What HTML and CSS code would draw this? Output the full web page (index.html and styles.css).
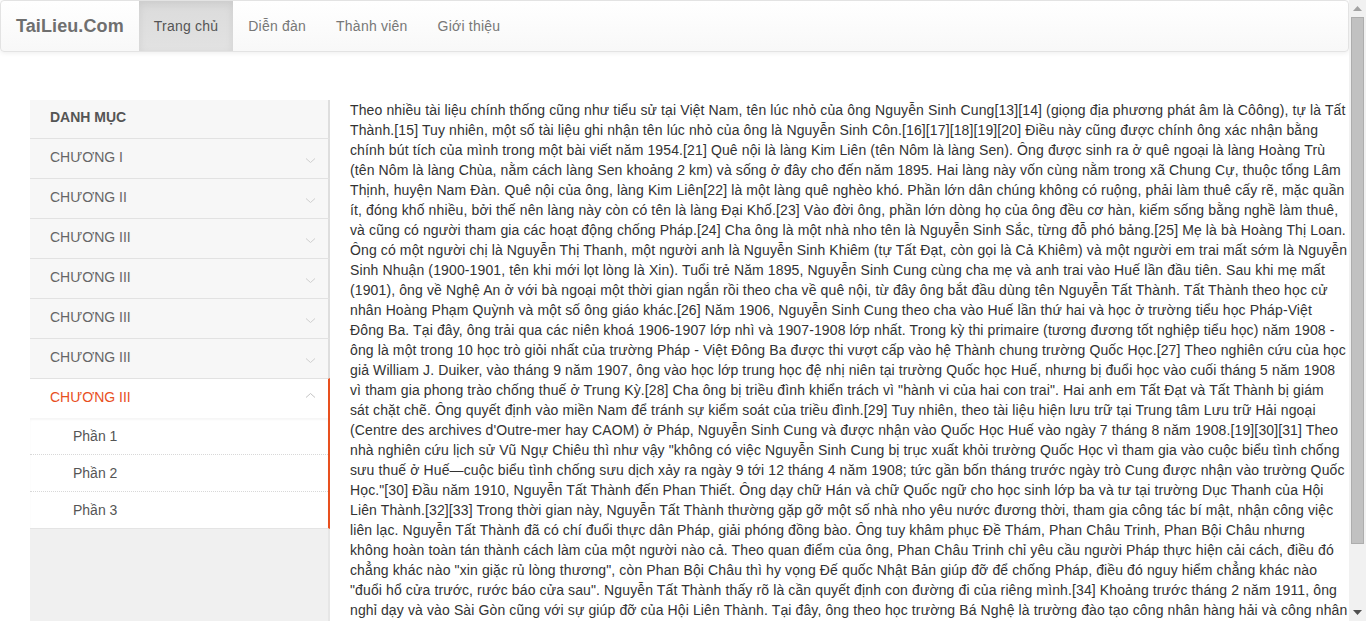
FILE: index.html
```html
<!DOCTYPE html>
<html lang="vi">
<head>
<meta charset="utf-8">
<title>TaiLieu.Com</title>
<link rel="stylesheet" href="styles.css">
</head>
<body>
<div class="page">
  <nav class="navbar">
    <a class="brand" href="#">TaiLieu.Com</a>
    <ul class="nav">
      <li class="active"><a href="#">Trang chủ</a></li>
      <li><a href="#">Diễn đàn</a></li>
      <li><a href="#">Thành viên</a></li>
      <li><a href="#">Giới thiệu</a></li>
    </ul>
  </nav>
  <div class="main-row">
    <aside class="sidebar">
      <div class="side-head">DANH MỤC</div>
      <ul class="menu">
        <li class="menu-item"><span>CHƯƠNG I</span><svg class="chev" width="11" height="12" viewBox="0 0 11 12"><polyline points="1,4.5 5.5,8.5 10,4.5" fill="none" stroke="#cfcfcf" stroke-width="1"/></svg></li>
        <li class="menu-item"><span>CHƯƠNG II</span><svg class="chev" width="11" height="12" viewBox="0 0 11 12"><polyline points="1,4.5 5.5,8.5 10,4.5" fill="none" stroke="#cfcfcf" stroke-width="1"/></svg></li>
        <li class="menu-item"><span>CHƯƠNG III</span><svg class="chev" width="11" height="12" viewBox="0 0 11 12"><polyline points="1,4.5 5.5,8.5 10,4.5" fill="none" stroke="#cfcfcf" stroke-width="1"/></svg></li>
        <li class="menu-item"><span>CHƯƠNG III</span><svg class="chev" width="11" height="12" viewBox="0 0 11 12"><polyline points="1,4.5 5.5,8.5 10,4.5" fill="none" stroke="#cfcfcf" stroke-width="1"/></svg></li>
        <li class="menu-item"><span>CHƯƠNG III</span><svg class="chev" width="11" height="12" viewBox="0 0 11 12"><polyline points="1,4.5 5.5,8.5 10,4.5" fill="none" stroke="#cfcfcf" stroke-width="1"/></svg></li>
        <li class="menu-item"><span>CHƯƠNG III</span><svg class="chev" width="11" height="12" viewBox="0 0 11 12"><polyline points="1,4.5 5.5,8.5 10,4.5" fill="none" stroke="#cfcfcf" stroke-width="1"/></svg></li>
        <li class="menu-item open"><span>CHƯƠNG III</span><svg class="chev up" width="11" height="12" viewBox="0 0 11 12"><polyline points="1,7.5 5.5,3.5 10,7.5" fill="none" stroke="#c4c4c4" stroke-width="1"/></svg></li>
        <li class="submenu">
          <ul>
            <li>Phần 1</li>
            <li>Phần 2</li>
            <li>Phần 3</li>
          </ul>
        </li>
      </ul>
      <div class="side-fill"></div>
    </aside>
    <article class="content">
      <p>Theo nhiều tài liệu chính thống cũng như tiểu sử tại Việt Nam, tên lúc nhỏ của ông Nguyễn Sinh Cung[13][14] (giọng địa phương phát âm là Côông), tự là Tất<br>
Thành.[15] Tuy nhiên, một số tài liệu ghi nhận tên lúc nhỏ của ông là Nguyễn Sinh Côn.[16][17][18][19][20] Điều này cũng được chính ông xác nhận bằng<br>
chính bút tích của mình trong một bài viết năm 1954.[21] Quê nội là làng Kim Liên (tên Nôm là làng Sen). Ông được sinh ra ở quê ngoại là làng Hoàng Trù<br>
(tên Nôm là làng Chùa, nằm cách làng Sen khoảng 2 km) và sống ở đây cho đến năm 1895. Hai làng này vốn cùng nằm trong xã Chung Cự, thuộc tổng Lâm<br>
Thịnh, huyện Nam Đàn. Quê nội của ông, làng Kim Liên[22] là một làng quê nghèo khó. Phần lớn dân chúng không có ruộng, phải làm thuê cấy rẽ, mặc quần<br>
ít, đóng khố nhiều, bởi thế nên làng này còn có tên là làng Đại Khố.[23] Vào đời ông, phần lớn dòng họ của ông đều cơ hàn, kiếm sống bằng nghề làm thuê,<br>
và cũng có người tham gia các hoạt động chống Pháp.[24] Cha ông là một nhà nho tên là Nguyễn Sinh Sắc, từng đỗ phó bảng.[25] Mẹ là bà Hoàng Thị Loan.<br>
Ông có một người chị là Nguyễn Thị Thanh, một người anh là Nguyễn Sinh Khiêm (tự Tất Đạt, còn gọi là Cả Khiêm) và một người em trai mất sớm là Nguyễn<br>
Sinh Nhuận (1900-1901, tên khi mới lọt lòng là Xin). Tuổi trẻ Năm 1895, Nguyễn Sinh Cung cùng cha mẹ và anh trai vào Huế lần đầu tiên. Sau khi mẹ mất<br>
(1901), ông về Nghệ An ở với bà ngoại một thời gian ngắn rồi theo cha về quê nội, từ đây ông bắt đầu dùng tên Nguyễn Tất Thành. Tất Thành theo học cử<br>
nhân Hoàng Phạm Quỳnh và một số ông giáo khác.[26] Năm 1906, Nguyễn Sinh Cung theo cha vào Huế lần thứ hai và học ở trường tiểu học Pháp-Việt<br>
Đông Ba. Tại đây, ông trải qua các niên khoá 1906-1907 lớp nhì và 1907-1908 lớp nhất. Trong kỳ thi primaire (tương đương tốt nghiệp tiểu học) năm 1908 -<br>
ông là một trong 10 học trò giỏi nhất của trường Pháp - Việt Đông Ba được thi vượt cấp vào hệ Thành chung trường Quốc Học.[27] Theo nghiên cứu của học<br>
giả William J. Duiker, vào tháng 9 năm 1907, ông vào học lớp trung học đệ nhị niên tại trường Quốc học Huế, nhưng bị đuổi học vào cuối tháng 5 năm 1908<br>
vì tham gia phong trào chống thuế ở Trung Kỳ.[28] Cha ông bị triều đình khiển trách vì "hành vi của hai con trai". Hai anh em Tất Đạt và Tất Thành bị giám<br>
sát chặt chẽ. Ông quyết định vào miền Nam để tránh sự kiểm soát của triều đình.[29] Tuy nhiên, theo tài liệu hiện lưu trữ tại Trung tâm Lưu trữ Hải ngoại<br>
(Centre des archives d'Outre-mer hay CAOM) ở Pháp, Nguyễn Sinh Cung và được nhận vào Quốc Học Huế vào ngày 7 tháng 8 năm 1908.[19][30][31] Theo<br>
nhà nghiên cứu lịch sử Vũ Ngự Chiêu thì như vậy "không có việc Nguyễn Sinh Cung bị trục xuất khỏi trường Quốc Học vì tham gia vào cuộc biểu tình chống<br>
sưu thuế ở Huế—cuộc biểu tình chống sưu dịch xảy ra ngày 9 tới 12 tháng 4 năm 1908; tức gần bốn tháng trước ngày trò Cung được nhận vào trường Quốc<br>
Học."[30] Đầu năm 1910, Nguyễn Tất Thành đến Phan Thiết. Ông dạy chữ Hán và chữ Quốc ngữ cho học sinh lớp ba và tư tại trường Dục Thanh của Hội<br>
Liên Thành.[32][33] Trong thời gian này, Nguyễn Tất Thành thường gặp gỡ một số nhà nho yêu nước đương thời, tham gia công tác bí mật, nhận công việc<br>
liên lạc. Nguyễn Tất Thành đã có chí đuổi thực dân Pháp, giải phóng đồng bào. Ông tuy khâm phục Đề Thám, Phan Châu Trinh, Phan Bội Châu nhưng<br>
không hoàn toàn tán thành cách làm của một người nào cả. Theo quan điểm của ông, Phan Châu Trinh chỉ yêu cầu người Pháp thực hiện cải cách, điều đó<br>
chẳng khác nào "xin giặc rủ lòng thương", còn Phan Bội Châu thì hy vọng Đế quốc Nhật Bản giúp đỡ để chống Pháp, điều đó nguy hiểm chẳng khác nào<br>
"đuổi hổ cửa trước, rước báo cửa sau". Nguyễn Tất Thành thấy rõ là cần quyết định con đường đi của riêng mình.[34] Khoảng trước tháng 2 năm 1911, ông<br>
nghỉ dạy và vào Sài Gòn cũng với sự giúp đỡ của Hội Liên Thành. Tại đây, ông theo học trường Bá Nghệ là trường đào tạo công nhân hàng hải và công nhân<br>
chuyên nghiệp cho xưởng Ba Son. Sau ba tháng học nghề, ông quyết định tìm một công việc trên tàu viễn dương để có cơ hội đi ra nước ngoài.</p>
    </article>
  </div>
</div>
<div class="scrollbar">
  <div class="sb-arrow"><svg width="9" height="5" viewBox="0 0 9 5"><polygon points="0,5 4.5,0 9,5" fill="#a3a3a3"/></svg></div>
  <div class="sb-track"><div class="sb-thumb"></div></div>
  <div class="sb-arrow"><svg width="9" height="5" viewBox="0 0 9 5"><polygon points="0,0 4.5,5 9,0" fill="#505050"/></svg></div>
</div>
</body>
</html>
```
FILE: styles.css
```css
html, body {
  margin: 0;
  padding: 0;
  height: 621px;
  overflow: hidden;
}
body {
  display: flex;
  font-family: "Liberation Sans", Arial, Helvetica, sans-serif;
  font-size: 14px;
  line-height: 20px;
  color: #333;
  background: #fff;
}
.page {
  flex: 1;
  min-width: 0;
  height: 621px;
  overflow: hidden;
  display: flex;
  flex-direction: column;
}
a { text-decoration: none; }
ul { list-style: none; margin: 0; padding: 0; }

/* navbar */
.navbar {
  display: flex;
  height: 50px;
  border: 1px solid #e3e3e3;
  border-radius: 4px;
  background: linear-gradient(to bottom, #ffffff 0, #f8f8f8 100%);
  box-shadow: inset 0 1px 0 rgba(255,255,255,.15), 0 1px 5px rgba(0,0,0,.075);
  flex-shrink: 0;
}
.brand {
  padding: 15px 15px;
  font-size: 18px;
  font-weight: bold;
  line-height: 20px;
  color: #6f6f6f;
  letter-spacing: 0.1px;
}
.nav { display: flex; }
.nav li a {
  display: block;
  padding: 15px 15px;
  line-height: 20px;
  color: #777;
  letter-spacing: 0.22px;
}
.nav li.active a {
  color: #555;
  background: linear-gradient(to bottom, #dbdbdb 0, #e2e2e2 100%);
  box-shadow: inset 0 3px 9px rgba(0,0,0,.075);
}

/* main */
.main-row {
  display: flex;
  flex: 1;
  min-height: 0;
  margin-top: 48px;
  padding-left: 30px;
}
.sidebar {
  width: 300px;
  flex-shrink: 0;
  display: flex;
  flex-direction: column;
}
.side-head {
  padding: 7px 20px 11px;
  font-weight: bold;
  color: #555;
  background: #f7f7f7;
  border-right: 2px solid #dedede;
}
.menu-item {
  display: flex;
  align-items: center;
  justify-content: space-between;
  padding: 8px 12px 11px 20px;
  border-top: 1px solid #e2e2e2;
  background: #f7f7f7;
  border-right: 2px solid #dedede;
  color: #666;
}
.menu-item .chev { margin-top: 6px; }
.menu-item .chev.up { margin-top: -2px; }
.menu-item.open {
  background: #fff;
  color: #e8501e;
  border-right-color: #e8501e;
}
.submenu {
  background: #fff;
  border-right: 2px solid #e8501e;
  border-bottom: 1px solid #e4e4e4;
  box-shadow: inset 0 2px 2px rgba(0,0,0,.04);
}
.submenu li {
  padding: 8px 20px 8px 43px;
  color: #555;
  border-top: 1px dotted #d8d8d8;
}
.submenu li:first-child { border-top: 0; padding-top: 8px; }
.side-fill {
  flex: 1;
  background: #f0f0f0;
  border-right: 2px solid #e6e6e6;
}
.content {
  flex: 1;
  min-width: 0;
  padding-left: 20px;
  overflow: hidden;
}
.content p {
  margin: 0;
  letter-spacing: 0.12px;
  white-space: nowrap;
}

/* scrollbar */
.scrollbar {
  width: 17px;
  height: 621px;
  flex-shrink: 0;
  background: #f1f1f1;
  display: flex;
  flex-direction: column;
}
.sb-arrow {
  height: 17px;
  display: flex;
  align-items: center;
  justify-content: center;
  flex-shrink: 0;
}
.sb-track {
  flex: 1;
  padding: 0 2px;
}
.sb-thumb {
  height: 527px;
  background: #c1c1c1;
  border: 1px solid #adadad;
  box-sizing: border-box;
}
```
